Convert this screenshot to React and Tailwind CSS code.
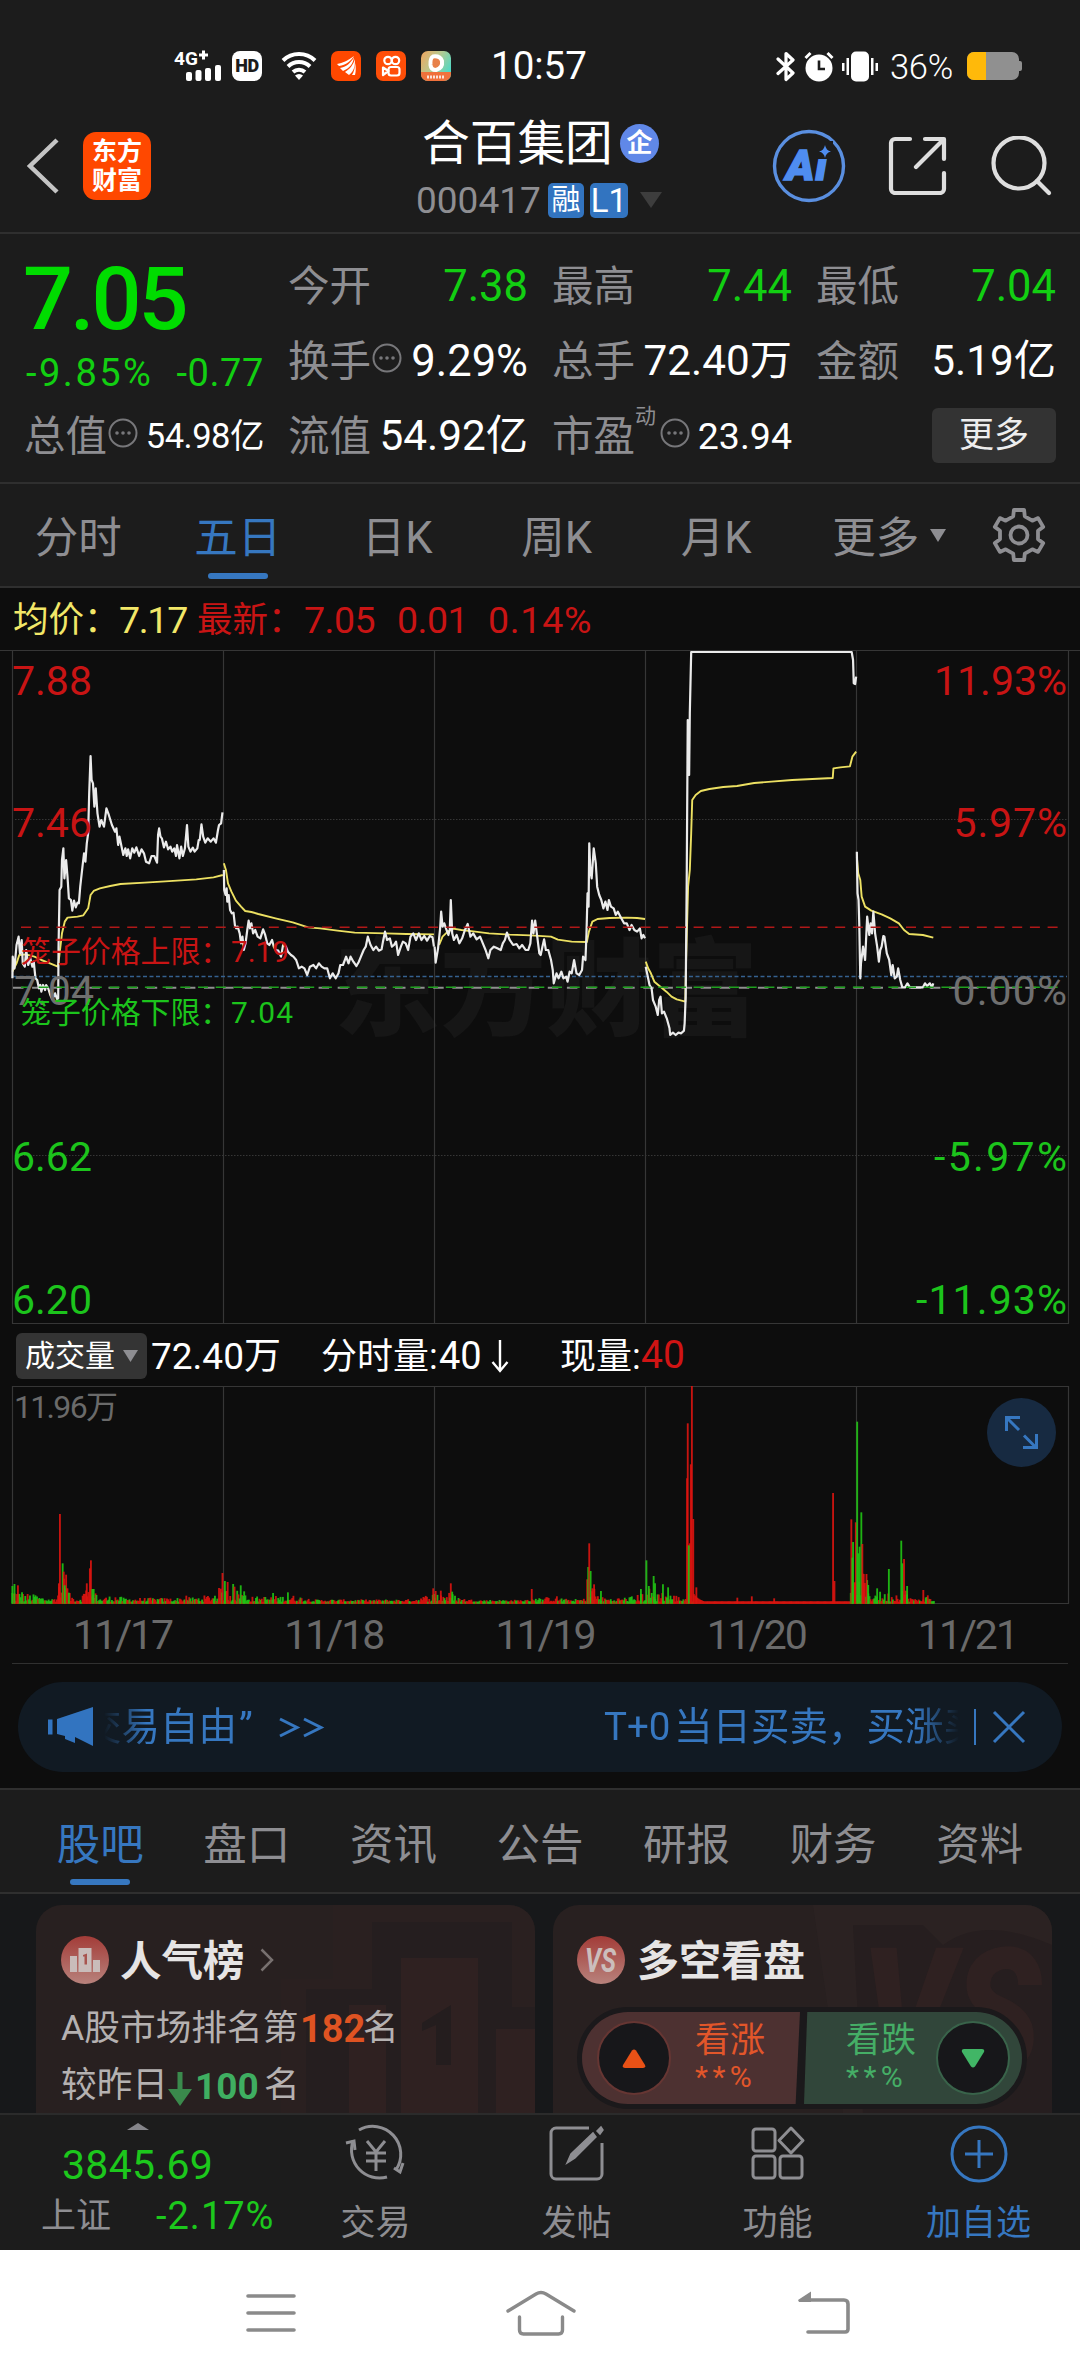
import React from "react";

const FONT = "font-[Roboto,'Noto_Sans_CJK_SC',sans-serif]";

/* ---------- status bar ---------- */

function StatusBar() {
  return (
    <div className="flex h-[106px] items-center pt-[26px] text-white">
      <svg className="ml-[173px] shrink-0 overflow-visible" width="50" height="34" viewBox="0 0 50 34">
        <text x="1" y="16" fontSize="19" fontWeight="700" fill="#fff" fontFamily="Roboto, sans-serif">4G</text>
        <path d="M26 6h9M30.5 1.500v9" stroke="#fff" strokeWidth="3" />
        <g fill="#fff">
          <rect x="13" y="23" width="6" height="9" rx="2" />
          <rect x="22.500" y="21" width="6" height="11" rx="2" />
          <rect x="32" y="19" width="6" height="13" rx="2" />
          <rect x="42" y="16" width="6" height="16" rx="2" />
        </g>
      </svg>
      <div className="ml-[9px] flex h-[30px] w-[30px] items-center justify-center rounded-[8px] bg-white text-[18px] font-black leading-none tracking-[-0.5px] text-[#1c1c1c]">HD</div>
      <svg className="ml-[19px]" width="36" height="29" viewBox="0 0 36 29" fill="none" stroke="#fff" strokeWidth="4">
        <path d="M2 8.500a23 23 0 0 1 32 0M7 14.500a16 16 0 0 1 22 0M12 20a9 9 0 0 1 12 0" />
        <path d="M18 28l-4-4.500a6 6 0 0 1 8 0z" fill="#fff" stroke="none" />
      </svg>
      <svg className="ml-[14px]" width="30" height="30" viewBox="0 0 30 30">
        <rect width="30" height="30" rx="7" fill="#ff4800" />
        <path d="M6 13C12 12 16 10 23 5c-3 5-8 9-15 10zM9 17c6-1 11-5 14-11-1 7-4 11-11 14zM14 21c5-3 8-7 10-13 0 8-1 12-6 16zM21 24c2-3 3-7 3-12 1 4 1 8 0 12z" fill="#fff" />
      </svg>
      <svg className="ml-[15px]" width="30" height="30" viewBox="0 0 30 30" fill="none" stroke="#fff" strokeWidth="2.200">
        <rect width="30" height="30" rx="7" fill="#ff4e08" stroke="none" />
        <circle cx="12" cy="9.500" r="3.700" />
        <circle cx="19.500" cy="9.500" r="3.700" />
        <rect x="12.500" y="16" width="11" height="8.500" rx="2.500" />
        <path d="M7 16.500l5.500 3.500-5.500 4z" strokeLinejoin="round" />
      </svg>
      <svg className="ml-[15px]" width="30" height="30" viewBox="0 0 30 30">
        <defs>
          <linearGradient id="app3" x1="0" y1="0" x2="1" y2="0.600">
            <stop offset="0" stopColor="#f2a45c" />
            <stop offset="0.500" stopColor="#b9c98f" />
            <stop offset="1" stopColor="#4fd8c4" />
          </linearGradient>
        </defs>
        <rect width="30" height="30" rx="7" fill="url(#app3)" />
        <path d="M0 21h30v2a7 7 0 0 1-7 7H7a7 7 0 0 1-7-7z" fill="#f0713c" />
        <path d="M12 5.500q7-1 9 4.500 1 7-6 9-5 0-5.500-5-.5-7 2.500-8.500z" fill="#e8804a" stroke="#fff" strokeWidth="4" />
        <path d="M13 8.500l6 3.500-6 3.500z" fill="#e8804a" />
        <path d="M6 26h18" stroke="#fff" strokeWidth="3" strokeDasharray="2 1" opacity="0.800" />
      </svg>
      <span className="ml-[40px] w-[100px] text-[38.500px] leading-none">10:57</span>
      <svg className="ml-[185px] shrink-0" width="20" height="31" viewBox="0 0 20 31" fill="none" stroke="#fff" strokeWidth="3.200" strokeLinejoin="round" strokeLinecap="round">
        <path d="M2 8l15 14-7 6.500V2.500L17 9 2 22.500" />
      </svg>
      <svg className="ml-[8px] shrink-0" width="30" height="31" viewBox="0 0 30 31">
        <circle cx="15" cy="17" r="13.500" fill="#fff" />
        <path d="M1.500 7l5-5M23.500 2l5 5" stroke="#fff" strokeWidth="3" />
        <path d="M15 9.500v8.500h6" stroke="#1c1c1c" strokeWidth="2.600" fill="none" />
      </svg>
      <svg className="ml-[8px] shrink-0" width="36" height="31" viewBox="0 0 36 31" fill="#fff">
        <rect x="9" y="0.500" width="18" height="30" rx="5" />
        <rect x="4.500" y="7" width="2.500" height="17" />
        <rect x="0" y="12" width="2.500" height="8" />
        <rect x="29" y="7" width="2.500" height="17" />
        <rect x="33.500" y="12" width="2.500" height="8" />
      </svg>
      <span className="ml-[12px] w-[65px] whitespace-nowrap pt-[2px] text-[34.500px] font-light leading-none tracking-[-0.300px]">36%</span>
      <svg className="ml-[12px] shrink-0" width="56" height="28" viewBox="0 0 56 28">
        <path d="M7 0h38a7 7 0 0 1 7 7v2h1a2 2 0 0 1 2 2v6a2 2 0 0 1-2 2h-1v2a7 7 0 0 1-7 7H7a7 7 0 0 1-7-7V7a7 7 0 0 1 7-7z" fill="#909090" />
        <path d="M7 0h12v28H7a7 7 0 0 1-7-7V7a7 7 0 0 1 7-7z" fill="#ffb90a" />
      </svg>
    </div>
  );
}

/* ---------- title bar ---------- */

function TitleBar() {
  return (
    <div className="flex h-[128px] border-b-2 border-[#2f2f2f]">
      <div className="flex w-[416px] items-start pt-[26px]">
        <svg className="ml-[26px] mt-[6px]" width="34" height="56" viewBox="0 0 34 56" fill="none" stroke="#c4c4c4" strokeWidth="4.500">
          <path d="M31 2L4 28l27 26" />
        </svg>
        <div className="ml-[23px] flex h-[68px] w-[68px] flex-col items-center justify-center gap-[3px] rounded-[13px] bg-[#ff4800] text-[25px] font-bold leading-[26px] text-white">
          <span>东方</span>
          <span>财富</span>
        </div>
      </div>
      <div className="w-[300px]">
        <div className="mt-[13px] flex h-[48px] items-center gap-[8px] pl-[6px]">
          <span className="w-[190px] whitespace-nowrap pt-[3px] text-[47.700px] leading-none text-white">合百集团</span>
          <span className="flex h-[39px] w-[39px] items-center justify-center rounded-full bg-[#6088e8] text-[26px] font-bold leading-none text-white">企</span>
        </div>
        <div className="mt-[14px] flex h-[38px] items-center">
          <span className="w-[132px] text-[37px] leading-none text-[#8e8e92]">000417</span>
          <span className="flex h-[35px] w-[36px] items-center justify-center rounded-[5px] bg-[#3274c0] text-[29px] leading-none text-white">融</span>
          <span className="ml-[6px] flex h-[35px] w-[38px] items-center justify-center rounded-[5px] bg-[#3274c0] text-[33px] leading-none text-white">L1</span>
          <svg className="ml-[12px]" width="22" height="16" viewBox="0 0 22 16">
            <path d="M0 0h22L11 16z" fill="#3d3d3d" />
          </svg>
        </div>
      </div>
      <div className="flex items-start pl-[56px] pt-[23px]">
        <svg width="74" height="74" viewBox="0 0 74 74">
          <circle cx="37" cy="37" r="34.500" fill="none" stroke="#5a8fe0" strokeWidth="3.400" />
          <text x="14" y="51" fontSize="43" fontWeight="900" fontStyle="italic" fontFamily="Roboto, sans-serif" fill="#4f8df0" stroke="#4f8df0" strokeWidth="1.500" textLength="41">Ai</text>
          <path d="M45 12h16v18H45z" fill="#1c1c1c" />
          <path d="M53 16q1 5.500 6 6.500q-5 1-6 6.500q-1-5.500-6-6.500q5-1 6-6.500z" fill="#4f8df0" />
        </svg>
        <svg className="ml-[42px] mt-[6px]" width="60" height="60" viewBox="0 0 60 60" fill="none" stroke="#dedede" strokeWidth="4.200" strokeLinecap="round" strokeLinejoin="round">
          <path d="M22 4H7a4 4 0 0 0-4 4v46a4 4 0 0 0 4 4h45a4 4 0 0 0 4-4V38M37 4h19v20M54 6L28 32" />
        </svg>
        <svg className="ml-[43px] mt-[7px]" width="62" height="62" viewBox="0 0 62 62" fill="none" stroke="#dedede" strokeWidth="4.200" strokeLinecap="round">
          <circle cx="28" cy="27" r="25.500" />
          <path d="M46 45l12 12" />
        </svg>
      </div>
    </div>
  );
}

/* ---------- quote panel ---------- */

function Dots() {
  return (
    <svg className="shrink-0" width="30" height="30" viewBox="0 0 30 30">
      <circle cx="15" cy="15" r="13.500" fill="none" stroke="#77777a" strokeWidth="2" />
      <g fill="#77777a">
        <circle cx="9" cy="15" r="1.800" />
        <circle cx="15" cy="15" r="1.800" />
        <circle cx="21" cy="15" r="1.800" />
      </g>
    </svg>
  );
}

function Cell({ label, value, green, dots, size, sup }) {
  return (
    <div className="flex h-[75px] items-center justify-between whitespace-nowrap">
      <div className="-ml-[2px] flex items-center">
        <span className="text-[41.5px] leading-none text-[#8e8e92]">{label}</span>
        {sup ? <span className="mb-[40px] w-[22px] text-[21px] leading-none text-[#8e8e92]">{sup}</span> : null}
        {dots ? <span className={sup ? "mb-[8px] ml-[3px]" : "mb-[8px] ml-[1px]"}><Dots /></span> : null}
      </div>
      <span className={(green ? "text-[#12cf12] " : "text-white ") + (size || "text-[42.300px]") + " leading-none"}>{value}</span>
    </div>
  );
}

function Quotes() {
  return (
    <div className="grid h-[250px] grid-cols-[238px_238px_238px_238px] gap-x-[26px] border-b-2 border-[#2f2f2f] pl-[26px] pt-[15px]">
      <div>
        <div className="-ml-[3px] flex h-[100px] items-center text-[88px] font-medium leading-none tracking-[-3px] text-[#00dc00]">7.05</div>
        <div className="flex h-[48px] items-center justify-between whitespace-nowrap text-[38px] leading-none text-[#12cf12]">
          <span className="tracking-[2.500px]">-9.85%</span>
          <span className="tracking-[0.600px]">-0.77</span>
        </div>
        <div className="h-[2px]" />
        <Cell label="总值" value="54.98亿" dots size="text-[34.500px] tracking-[-0.500px]" />
      </div>
      <div>
        <Cell label="今开" value="7.38" green size="text-[43.500px]" />
        <Cell label="换手" value="9.29%" dots size="text-[43.500px]" />
        <Cell label="流值" value="54.92亿" />
      </div>
      <div>
        <Cell label="最高" value="7.44" green size="text-[43.500px]" />
        <Cell label="总手" value="72.40万" />
        <Cell label="市盈" sup="动" value="23.94" dots size="text-[37.500px]" />
      </div>
      <div>
        <Cell label="最低" value="7.04" green size="text-[43.500px]" />
        <Cell label="金额" value="5.19亿" />
        <div className="flex h-[72px] items-center justify-end">
          <span className="flex h-[55px] w-[124px] items-center justify-center rounded-[6px] bg-[#333333] text-[35px] leading-none text-[#ededed]">更多</span>
        </div>
      </div>
    </div>
  );
}

/* ---------- period tabs ---------- */

function gearPath(cx, cy) {
  const teeth = 6;
  const pts = [];
  for (let i = 0; i < teeth; i++) {
    const a = (i * 2 * Math.PI) / teeth - Math.PI / 2;
    [[-0.3, 19.5], [-0.2, 25.5], [0.2, 25.5], [0.3, 19.5]].forEach(([d, r]) => {
      pts.push((cx + r * Math.cos(a + d)).toFixed(1) + "," + (cy + r * Math.sin(a + d)).toFixed(1));
    });
  }
  return "M" + pts.join("L") + "Z";
}

function PeriodTabs() {
  const tabs = ["分时", "五日", "日K", "周K", "月K", "更多"];
  return (
    <div className="flex h-[104px] items-center border-b-2 border-[#2f2f2f]">
      {tabs.map((t) => (
        <div key={t} className="relative flex h-full w-[159.500px] items-center justify-center pr-[3px] pt-[8px]">
          <span className={"text-[43.500px] leading-none " + (t === "五日" ? "text-[#3677c0]" : "text-[#8e8e92]")}>{t}</span>
          {t === "五日" ? <span className="absolute bottom-[7px] h-[6px] w-[60px] rounded-[3px] bg-[#3677c0]" /> : null}
          {t === "更多" ? (
            <svg className="absolute left-[132px] top-[45px]" width="16" height="13" viewBox="0 0 16 13">
              <path d="M0 0h16L8 13z" fill="#8e8e92" />
            </svg>
          ) : null}
        </div>
      ))}
      <svg className="ml-[33px]" width="58" height="58" viewBox="0 0 58 58" fill="none" stroke="#8e8e92" strokeWidth="3.800" strokeLinejoin="round">
        <path d={gearPath(29, 29)} />
        <circle cx="29" cy="29" r="8.500" />
      </svg>
    </div>
  );
}

/* ---------- charts ---------- */

const PRICE = [
  "36,1195 37,1130 42,1165 48,1095 54,1070 58,1120 63,1080 66,1150 72,1160 76,1110 82,1155 88,1135 94,1160 98,1145 103,1195 108,1200 113,1225 117,1215 120,1235 125,1215 131,1230 134,1215 140,1225 146,1245 152,1258 160,1240 166,1258 169,1255 170,1100 173,930 178,920 180,840 184,805 187,895 192,840 196,890 200,955 206,960 210,992 215,962 220,982 225,968 229,970 233,920 240,855 244,820 248,845 252,790 256,760 259,640 263,528 266,600 270,610 274,680 278,625 283,700 289,740 294,720 302,740 309,685 316,705 325,735 334,755 338,745 343,795 347,770 353,800 358,825 364,805 368,828 372,808 378,835 384,805 390,818 396,802 404,828 411,808 418,820 424,845 433,850 440,828 448,828 456,848 459,765 462,745 466,770 470,775 476,802 482,785 488,808 495,800 500,815 506,805 511,828 514,795 521,835 526,800 531,828 537,805 543,735 547,800 553,815 560,803 565,815 573,805 577,780 580,780 585,733 590,770 596,788 603,775 612,785 620,775 627,788 633,750 636,735 642,730 646,697",
  "650,870 651,930 655,945 658,925 660,965 664,945 668,990 673,1000 678,998 682,1035 686,1045 690,1040 696,1060 700,1090 704,1070 708,1110 713,1090 718,1050 722,1022 726,1045 730,1030 735,1060 741,1050 748,1070 756,1075 764,1048 770,1065 776,1090 782,1095 790,1080 795,1100 800,1110 808,1112 816,1130 822,1095 830,1100 836,1115 845,1125 852,1130 860,1140 868,1165 876,1160 884,1165 892,1185 900,1160 910,1155 918,1165 926,1150 934,1160 942,1165 950,1165 958,1195 966,1180 975,1195 983,1180 988,1155 996,1155 1005,1130 1012,1150 1018,1130 1026,1145 1035,1158 1042,1145 1048,1130 1056,1110 1062,1100 1068,1070 1076,1095 1084,1110 1092,1100 1100,1112 1108,1108 1112,1085 1118,1055 1124,1080 1132,1075 1138,1100 1144,1095 1150,1085 1156,1125 1164,1100 1170,1085 1178,1090 1185,1110 1192,1070 1200,1060 1208,1080 1216,1060 1224,1080 1232,1068 1240,1082 1248,1068 1256,1072 1260,1100",
  "1262,1100 1265,1148 1272,1105 1278,1045 1281,995 1285,1040 1290,1030 1296,1048 1302,1065 1306,1050 1309,960 1313,1060 1318,1080 1326,1065 1334,1090 1342,1075 1350,1050 1358,1032 1366,1070 1374,1060 1384,1078 1394,1070 1402,1090 1410,1110 1418,1135 1424,1110 1434,1100 1444,1105 1454,1110 1460,1090 1466,1080 1472,1058 1480,1080 1490,1095 1500,1092 1508,1105 1516,1095 1526,1110 1534,1110 1540,1090 1545,1022 1549,1060 1554,1022 1560,1070 1566,1120 1570,1125 1575,1100 1580,1078 1585,1110 1592,1110 1600,1140 1605,1170 1608,1210 1616,1180 1622,1195 1630,1175 1636,1195 1644,1190 1648,1205 1654,1175 1660,1180 1667,1140 1674,1180 1682,1185 1690,1170 1693,1130 1700,1140 1703,1060 1706,940 1709,980 1711,790 1714,870 1718,895 1724,805 1730,850 1734,920 1740,945 1746,960 1752,985 1758,965 1764,990 1768,960 1774,980 1782,985 1788,1005 1794,995 1804,1015 1812,1030 1820,1030 1828,1050 1834,1035 1842,1050 1850,1055 1858,1045 1863,1075 1868,1065 1873,1075",
  "1875,1160 1880,1185 1886,1215 1892,1225 1896,1260 1904,1280 1910,1305 1914,1260 1918,1250 1922,1300 1928,1295 1936,1315 1944,1345 1946,1365 1954,1358 1962,1365 1970,1358 1978,1360 1986,1352 1988,1330 1991,1250 1994,900 1997,420 2001,585 2003,400 2007,216 2473,216 2477,240 2479,310 2483,312 2486,290",
  "2488,815 2490,940 2493,960 2495,1030 2498,1195 2500,1150 2506,1100 2512,1140 2518,1010 2524,1065 2528,1030 2532,1060 2536,995 2541,1060 2547,1100 2552,1145 2556,1110 2560,1100 2565,1068 2568,1070 2575,1120 2582,1140 2588,1185 2592,1155 2598,1195 2604,1190 2608,1165 2614,1200 2620,1222 2628,1222 2635,1210 2642,1222 2680,1222 2686,1210 2692,1218 2700,1210 2706,1222 2710,1210",
];

const AVERAGE = [
  "36,1175 48,1150 56,1125 75,1123 100,1130 120,1140 140,1148 168,1160 172,1130 180,1060 188,1025 196,1013 225,1010 242,1006 256,985 263,945 272,933 290,925 320,918 350,912 420,908 480,904 570,898 620,892 647,885",
  "650,850 656,870 662,910 672,935 685,962 700,980 712,993 730,996 750,1002 800,1015 850,1027 895,1042 930,1045 980,1052 1030,1058 1120,1060 1180,1062 1260,1063",
  "1275,1095 1285,1070 1300,1055 1316,1046 1340,1050 1380,1055 1420,1060 1480,1064 1540,1066 1600,1070 1620,1079 1660,1085 1704,1086 1710,1055 1720,1025 1735,1017 1770,1014 1820,1013 1850,1014 1873,1017",
  "1875,1145 1882,1165 1890,1180 1900,1205 1915,1218 1935,1235 1950,1250 1965,1258 1990,1265 1992,1150 1998,920 2003,870 2007,760 2010,660 2020,645 2035,633 2060,627 2100,621 2140,618 2190,609 2240,605 2300,600 2418,594 2420,565 2440,562 2468,559 2475,530 2486,515",
  "2488,830 2492,880 2498,900 2502,950 2512,980 2530,992 2560,1003 2585,1015 2610,1030 2625,1050 2640,1062 2680,1065 2710,1073",
];

const DAY_LINES = [223.5, 434.5, 645.5, 856.5];

function PriceChart() {
  const big = { fontSize: 41, fontFamily: "Roboto, sans-serif" };
  const cage = { fontSize: 29.9, fontFamily: "Roboto, 'Noto Sans CJK SC', sans-serif" };
  return (
    <svg className="block" width="1080" height="675" viewBox="0 650 1080 675">
      <g fill="#161616" fontSize="106" fontWeight="900" fontFamily="'Noto Sans CJK SC', sans-serif">
        <text x="334" y="1027">东方财富</text>
      </g>
      <g stroke="#363636" strokeWidth="1.200" fill="none">
        <path d="M0 650.500H1080" />
        <path d="M12.500 650V1323.500H1068.500V650" />
        {DAY_LINES.map((x) => <path key={x} d={"M" + x + " 651V1323"} />)}
        <path d="M15 819.500H1068M15 1155.500H1068" strokeDasharray="1.500 1.500" />
      </g>
      <path d="M13 976.500H1067" stroke="#35618f" strokeWidth="1.300" strokeDasharray="4 2.500" />
      <path d="M13 987.700H1062" stroke="#8f8f8f" strokeWidth="2" strokeDasharray="10.500 8.600" />
      <g transform="translate(0 580) scale(0.34439 0.33333)" fill="none" strokeLinejoin="round">
        {AVERAGE.map((p, i) => <polyline key={i} points={p} stroke="#ece062" strokeWidth="1.900" vectorEffect="non-scaling-stroke" />)}
        {PRICE.map((p, i) => <polyline key={i} points={p} stroke="#ebebeb" strokeWidth="2.200" vectorEffect="non-scaling-stroke" />)}
      </g>
      <path d="M21 927.300H1058" stroke="#b01818" strokeWidth="1.600" strokeDasharray="10 7.700" />
      <path d="M21 987.300H1058" stroke="#1fa01f" strokeWidth="1.600" strokeDasharray="10 7.700" />
      <g {...big}>
        <g fill="#c81414">
          <text x="12" y="695">7.88</text>
          <text x="12" y="837">7.46</text>
          <text x="1067" y="695" textAnchor="end">11.93%</text>
          <text x="1067" y="837" textAnchor="end" textLength="113.500">5.97%</text>
        </g>
        <g fill="#6f6f6f">
          <text x="14" y="1005">7.04</text>
          <text x="1067" y="1005" textAnchor="end" textLength="114.500">0.00%</text>
        </g>
        <g fill="#1cc41c">
          <text x="12" y="1171">6.62</text>
          <text x="12" y="1314">6.20</text>
          <text x="1067" y="1171" textAnchor="end" textLength="133">-5.97%</text>
          <text x="1067" y="1314" textAnchor="end" textLength="151">-11.93%</text>
        </g>
      </g>
      <g {...cage}>
        <text x="21" y="962" fill="#c81414">笼子价格上限：</text>
        <text x="231" y="962" fill="#c81414" textLength="58">7.19</text>
        <text x="21" y="1023" fill="#1cc41c">笼子价格下限：</text>
        <text x="231" y="1023" fill="#1cc41c" textLength="62">7.04</text>
      </g>
    </svg>
  );
}

/* typical bar height at [position, height]; peaks are listed in SPIKES */
const ENVELOPE = [[35, 50], [60, 30], [110, 20], [150, 9], [165, 20], [172, 80], [192, 80], [200, 28], [225, 9], [240, 30], [268, 40], [290, 12], [335, 22], [360, 12], [500, 12], [560, 14], [600, 20], [640, 40], [665, 40], [700, 36], [730, 16], [800, 18], [850, 20], [890, 14], [910, 7], [1100, 7], [1200, 8], [1240, 22], [1270, 34], [1310, 28], [1340, 11], [1380, 6], [1535, 6], [1550, 22], [1570, 10], [1610, 20], [1650, 7], [1700, 10], [1725, 50], [1740, 16], [1780, 10], [1850, 20], [1880, 44], [1930, 30], [1980, 16], [2025, 36], [2035, 14], [2060, 7], [2420, 5], [2465, 6], [2475, 60], [2510, 90], [2530, 40], [2560, 30], [2600, 28], [2620, 60], [2640, 20], [2660, 7], [2690, 18], [2712, 6]];

const SPIKES = [[36, 648, 1], [42, 642, 1], [52, 646, 0], [64, 667, 1], [103, 676, 1], [171, 640, 0], [174, 432, 0], [182, 580, 1], [185, 605, 0], [192, 614, 0], [188, 646, 1], [200, 668, 1], [252, 640, 0], [261, 595, 0], [264, 571, 0], [268, 657, 1], [272, 657, 1], [280, 675, 1], [541, 677, 0], [636, 654, 0], [646, 609, 0], [653, 633, 1], [661, 636, 0], [677, 642, 1], [681, 650, 0], [699, 646, 1], [709, 664, 1], [793, 669, 1], [836, 667, 1], [1258, 655, 0], [1265, 663, 0], [1280, 662, 0], [1309, 640, 0], [1313, 665, 1], [1544, 657, 0], [1705, 628, 0], [1708, 591, 1], [1711, 520, 0], [1715, 603, 1], [1720, 655, 0], [1725, 643, 0], [1745, 663, 1], [1861, 657, 1], [1877, 571, 1], [1884, 648, 1], [1898, 618, 1], [1902, 640, 1], [1925, 643, 1], [1940, 652, 1], [1995, 325, 0], [1997, 160, 0], [2003, 520, 0], [2006, 283, 0], [2009, 48, 0], [2000, 526, 1], [2013, 447, 0], [2022, 652, 0], [2141, 683, 0], [2183, 679, 0], [2248, 685, 0], [2419, 369, 0], [2423, 633, 0], [2472, 448, 0], [2475, 563, 1], [2477, 516, 1], [2485, 457, 0], [2492, 550, 1], [2489, 155, 1], [2496, 530, 1], [2501, 427, 1], [2504, 522, 0], [2508, 612, 0], [2516, 612, 0], [2521, 645, 1], [2547, 655, 1], [2581, 597, 1], [2617, 512, 1], [2621, 580, 1], [2625, 567, 0], [2634, 648, 1], [2681, 660, 0], [2694, 676, 0]];

function envelopeAt(x) {
  for (let i = 1; i < ENVELOPE.length; i++) {
    if (x <= ENVELOPE[i][0]) {
      const [x0, h0] = ENVELOPE[i - 1];
      const [x1, h1] = ENVELOPE[i];
      return h0 + ((h1 - h0) * (x - x0)) / (x1 - x0);
    }
  }
  return 4;
}

function volumeBars() {
  const bars = [];
  let seed = 12345;
  const rand = () => {
    seed = (seed * 1103515245 + 12345) % 2147483648;
    return seed / 2147483648;
  };
  for (let x = 36; x < 2712; x += 3.4) {
    const rally = (x > 2012 && x < 2470) || (x > 165 && x < 178) || (x > 240 && x < 262);
    const r = rand();
    const h = rally && x > 2012 ? Math.max(6, 32 * Math.exp(-(x - 2012) / 20)) : 5 + envelopeAt(x) * Math.pow(r, 1.5);
    const up = rally ? true : rand() > 0.48;
    bars.push([x, 700 - h, up ? 0 : 1]);
  }
  return bars;
}

function VolumeChart() {
  return (
    <svg className="block" width="1080" height="219" viewBox="0 1386 1080 219">
      <g stroke="#363636" strokeWidth="1.200" fill="none">
        <path d="M12.500 1386.500H1068.500V1603.500H12.500Z" />
        {DAY_LINES.map((x) => <path key={x} d={"M" + x + " 1387V1603"} />)}
      </g>
      <path d="M12.500 1603.300H934" stroke="#8a2410" strokeWidth="1.600" />
      <g transform="translate(0 1370) scale(0.34439 0.33333)" strokeWidth="5.400">
        {volumeBars().concat(SPIKES).map(([x, y, c], i) => (
          <path key={i} d={"M" + x.toFixed(1) + " 701V" + y.toFixed(1)} stroke={c ? "#20c414" : "#dc1410"} strokeOpacity="0.900" />
        ))}
      </g>
      <text x="14" y="1418" fontSize="32" fill="#6a6a6a" fontFamily="Roboto, 'Noto Sans CJK SC', sans-serif" textLength="104">11.96万</text>
      <circle cx="1021.500" cy="1432.500" r="34.500" fill="#172a41" />
      <path d="M1019 1430l-12-12M1006.500 1431v-13.500h13.500M1024 1435.500l12 12M1036.500 1434v13.500h-13.500" stroke="#3677c0" strokeWidth="3" fill="none" />
    </svg>
  );
}

function Charts() {
  const dates = ["11/17", "11/18", "11/19", "11/20", "11/21"];
  return (
    <div className="h-[1200px] bg-[#0d0d0d]">
      <div className="flex h-[62px] items-center whitespace-nowrap pl-[13px] pt-[3px] text-[35.500px] leading-none">
        <span className="w-[106px] text-[#f2e768]">均价：</span>
        <span className="w-[78px] text-[37.500px] tracking-[-1.300px] text-[#f2e768]">7.17</span>
        <span className="w-[107px] text-[#c81414]">最新：</span>
        <span className="w-[93px] text-[37.500px] tracking-[-0.500px] text-[#c81414]">7.05</span>
        <span className="w-[91px] text-[37.500px] tracking-[-0.500px] text-[#c81414]">0.01</span>
        <span className="text-[37.500px] tracking-[0.700px] text-[#c81414]">0.14%</span>
      </div>
      <PriceChart />
      <div className="flex h-[61px] items-center whitespace-nowrap pl-[16px] text-[36px] leading-none text-white">
        <div className="flex h-[46px] w-[131px] items-center rounded-[6px] bg-[#343434] pl-[9px]">
          <span className="w-[98px] text-[30px] leading-none">成交量</span>
          <svg width="15" height="12" viewBox="0 0 15 12">
            <path d="M0 0h15L7.500 12z" fill="#8e8e92" />
          </svg>
        </div>
        <span className="ml-[4px] w-[170px] pt-[2px] text-[37px]">72.40万</span>
        <span className="w-[118px] pt-[2px]">分时量:</span>
        <span className="w-[52px] text-[38px]">40</span>
        <svg className="mr-[51px]" width="18" height="34" viewBox="0 0 18 34" fill="none" stroke="#fff" strokeWidth="2.400">
          <path d="M9 1v31M1.500 23L9 32l7.500-9" />
        </svg>
        <span className="w-[81px] pt-[2px]">现量:</span>
        <span className="text-[39px] text-[#d01414]">40</span>
      </div>
      <VolumeChart />
      <div className="mx-[12px] grid h-[59px] grid-cols-5 items-center border-b border-[#303030] pt-[3px] text-center text-[41px] leading-none tracking-[-2px] text-[#6a6a6a]">
        {dates.map((d) => <span key={d} className="pl-[10px]">{d}</span>)}
      </div>
      <Banner />
    </div>
  );
}

function Banner() {
  return (
    <div className="mx-[18px] mt-[18px] flex h-[90px] items-center rounded-[45px] bg-[#111a23] text-[38.500px] leading-none text-[#3677c0]">
      <svg className="ml-[30px] shrink-0" width="46" height="40" viewBox="0 0 46 40" fill="#3274c0">
        <path d="M45 0v39L27 30v6l-10-4v-3l-8-2V12z" />
        <rect x="0" y="12.500" width="4.500" height="15" />
      </svg>
      <div className="ml-[10px] flex w-[855px] overflow-hidden whitespace-nowrap py-2 [mask-image:linear-gradient(to_right,transparent,black_5%,black_95%,transparent)]">
        <span className="ml-[-21px] w-[156px] shrink-0">交易自由</span>
        <span className="w-[38px] shrink-0">”</span>
        <svg className="mt-[5px] w-[327px] shrink-0" width="327" height="28" viewBox="0 0 327 28" fill="none" stroke="#3677c0" strokeWidth="3">
          <path d="M3 6l17 8.500L3 23M27 6l17 8.500L27 23" />
        </svg>
        <span className="w-[70px] shrink-0">T+0</span>
        <span className="shrink-0">当日买卖，买涨买跌</span>
      </div>
      <span className="ml-[15px] h-[36px] w-[1.500px] bg-[#3677c0]" />
      <svg className="ml-[16px]" width="34" height="34" viewBox="0 0 34 34" stroke="#3677c0" strokeWidth="3">
        <path d="M2 2l30 30M32 2L2 32" />
      </svg>
    </div>
  );
}

/* ---------- info section ---------- */

function InfoTabs() {
  const tabs = ["股吧", "盘口", "资讯", "公告", "研报", "财务", "资料"];
  return (
    <div className="grid h-[106px] grid-cols-7 border-y-2 border-[#2f2f2f] bg-[#1c1c1c] px-[27px]">
      {tabs.map((t) => (
        <div key={t} className="relative flex items-center justify-center pt-[9px]">
          <span className={"text-[43.500px] leading-none " + (t === "股吧" ? "text-[#3677c0]" : "text-[#8e8e92]")}>{t}</span>
          {t === "股吧" ? <span className="absolute bottom-[7px] h-[6px] w-[60px] rounded-[3px] bg-[#3677c0]" /> : null}
        </div>
      ))}
    </div>
  );
}

function RankCard() {
  return (
    <div className="relative h-[260px] overflow-hidden rounded-[26px] bg-[#282020]">
      <svg className="absolute left-0 top-0" width="499" height="208" viewBox="0 0 499 208">
        <path d="M245 208V74h52V40h0V0h202v208z" fill="#2b2222" opacity="0.600" />
        <path d="M270 208V84h66V17h140v85h23v106z" fill="#251e1f" />
        <path d="M365 208V53h77v155zM313 208V100h37v108zM460 208v-84h39v84z" fill="#2f2121" />
        <path d="M386 118l29-18v60h-15v-40l-14 6z" fill="#241d1e" />
      </svg>
      <div className="relative pl-[25px] pt-[31px]">
        <div className="flex h-[48px] items-center">
          <svg width="48" height="48" viewBox="0 0 48 48">
            <defs>
              <linearGradient id="badge" x1="0" y1="0" x2="0" y2="1">
                <stop offset="0" stopColor="#a33c38" />
                <stop offset="1" stopColor="#b8827c" />
              </linearGradient>
            </defs>
            <circle cx="24" cy="24" r="24" fill="url(#badge)" />
            <g fill="#c9bcba">
              <rect x="9" y="20" width="7" height="16" />
              <rect x="17.500" y="12" width="13" height="24" />
              <rect x="32" y="24" width="7" height="12" />
            </g>
            <path d="M22 19l4-1.500v11h-2.500v-8H22z" fill="#a8544f" />
          </svg>
          <span className="ml-[11px] w-[140px] whitespace-nowrap pt-[3px] text-[41.500px] font-bold leading-none text-[#e6e4e4]">人气榜</span>
          <svg width="14" height="24" viewBox="0 0 14 24" fill="none" stroke="#77706f" strokeWidth="2.500">
            <path d="M1.500 1.500L12 12 1.500 22.500" />
          </svg>
        </div>
        <div className="mt-[21px] flex h-[48px] items-center whitespace-nowrap text-[35.700px] leading-none text-[#b5b1b1]">
          <span className="w-[239px]">A股市场排名第</span>
          <span className="w-[63px] text-[38px] font-bold text-[#df5322]">182</span>
          <span>名</span>
        </div>
        <div className="mt-[9px] flex h-[48px] items-center whitespace-nowrap text-[35.700px] leading-none text-[#b5b1b1]">
          <span className="w-[107px]">较昨日</span>
          <svg className="mt-[6px]" width="24" height="34" viewBox="0 0 24 34">
            <path d="M9.500 0h5v17H24L12 34 0 17h9.500z" fill="#3a8a4c" />
          </svg>
          <span className="ml-[3px] w-[69px] text-[37px] font-bold text-[#3fae61]">100</span>
          <span>名</span>
        </div>
      </div>
    </div>
  );
}

function VersusCard() {
  return (
    <div className="relative h-[260px] overflow-hidden rounded-[26px] bg-[#282020]">
      <svg className="absolute left-0 top-0" width="499" height="208" viewBox="0 0 499 208">
        <path d="M260 0h239v208H290z" fill="#2c2423" opacity="0.700" />
        <path d="M300 20h70l20 20q40-30 109 0v168H310z" fill="#261e1f" />
        <text x="308" y="168" fontSize="175" fontWeight="900" fontStyle="italic" fontFamily="Roboto, sans-serif" fill="#2f2121" textLength="180" lengthAdjust="spacingAndGlyphs">VS</text>
      </svg>
      <div className="relative pl-[24px] pt-[31px]">
        <div className="flex h-[48px] items-center">
          <svg width="48" height="48" viewBox="0 0 48 48">
            <circle cx="24" cy="24" r="24" fill="url(#badge)" />
            <text x="8" y="36" fontSize="33" fontWeight="700" fontStyle="italic" fontFamily="Roboto, sans-serif" fill="#cbbebc" textLength="31" lengthAdjust="spacingAndGlyphs">VS</text>
          </svg>
          <span className="ml-[12px] whitespace-nowrap pt-[3px] text-[42px] font-bold leading-none text-[#e6e4e4]">多空看盘</span>
        </div>
        <div className="mt-[23px] flex h-[102px] w-[450px] rounded-[51px] border-[5px] border-[#1b191b] bg-[#1b191b]">
          <div className="flex h-[92px] w-[218px] items-center rounded-l-[46px] bg-[#4d3131] [clip-path:polygon(0_0,100%_0,98%_100%,0_100%)]">
            <div className="ml-[15px] flex h-[74px] w-[74px] items-center justify-center rounded-full border-[2px] border-[#663633] bg-[#17171a]">
              <svg width="24" height="19" viewBox="0 0 24 19"><path d="M10 1.500q2-2 4 0L23 16q1 3-2 3H3q-3 0-2-3z" fill="#e85116" /></svg>
            </div>
            <div className="ml-[24px] text-[35px] leading-none text-[#e2562a]">
              <div className="h-[36px]">看涨</div>
              <div className="mt-[1px] text-[30px] leading-[34px]"><span className="tracking-[4.500px]">**</span>%</div>
            </div>
          </div>
          <div className="ml-[4px] flex h-[92px] w-[218px] items-center rounded-r-[46px] bg-[#31463a] [clip-path:polygon(1.500%_0,100%_0,100%_100%,0_100%)]">
            <div className="ml-[42px] w-[90px] text-[35px] leading-none text-[#45ae66]">
              <div className="h-[36px]">看跌</div>
              <div className="mt-[1px] text-[30px] leading-[34px]"><span className="tracking-[4.500px]">**</span>%</div>
            </div>
            <div className="flex h-[74px] w-[74px] items-center justify-center rounded-full border-[2px] border-[#39634a] bg-[#17171a]">
              <svg width="24" height="19" viewBox="0 0 24 19"><path d="M10 17.500q2 2 4 0L23 3q1-3-2-3H3Q0 0 1 3z" fill="#41b666" /></svg>
            </div>
          </div>
        </div>
      </div>
    </div>
  );
}

/* ---------- bottom bars ---------- */

const ACTIONS = [
  {
    label: "交易",
    icon: (
      <g>
        <path d="M16 9a28 28 0 0 1 37 40M44 56A28 28 0 0 1 10 20" />
        <path d="M3 22l8-2 1 9M60 42l-3 9-6-4" />
        <path d="M24 20l9 11 9-11M33 31v19M23 32h20M23 40h20" />
      </g>
    ),
  },
  {
    label: "发帖",
    icon: (
      <g>
        <path d="M45 7H12a5 5 0 0 0-5 5v41a5 5 0 0 0 5 5h41a5 5 0 0 0 5-5V22" />
        <path d="M23 42l4-9 22-21 3 4-21 21z" fill="#8e8e92" strokeWidth="1.500" />
        <path d="M53 10l4-4 2 3-3 4z" fill="#8e8e92" strokeWidth="1.500" />
      </g>
    ),
  },
  {
    label: "功能",
    icon: (
      <g>
        <rect x="8" y="8" width="22" height="22" rx="3" />
        <rect x="8" y="35" width="22" height="22" rx="3" />
        <rect x="35" y="35" width="22" height="22" rx="3" />
        <path d="M46 7l12 12.500L46 32 34 19.500z" strokeLinejoin="round" />
      </g>
    ),
  },
  {
    label: "加自选",
    active: true,
    icon: (
      <g>
        <circle cx="33" cy="33" r="27" />
        <path d="M33 19v28M19 33h28" />
      </g>
    ),
  },
];

function ActionBar() {
  return (
    <div className="flex h-[137px] border-t-2 border-[#2b2b2b] bg-[#1c1c1c]">
      <div className="w-[275px]">
        <svg className="ml-[127px] mt-[8px]" width="22" height="7" viewBox="0 0 22 7">
          <path d="M0 7L11 0l11 7z" fill="#85858a" />
        </svg>
        <div className="mt-[14px] pl-[62px] text-[41px] leading-[42px] tracking-[0.300px] text-[#1cc81c]">3845.69</div>
        <div className="mt-[9px] flex h-[42px] items-center pl-[41px] leading-none">
          <span className="w-[115px] text-[35px] text-[#8e8e92]">上证</span>
          <span className="whitespace-nowrap text-[38px] tracking-[1px] text-[#1cc81c]">-2.17%</span>
        </div>
      </div>
      {ACTIONS.map((a) => (
        <div key={a.label} className="flex w-[201px] flex-col items-center pt-[6px]">
          <svg width="66" height="66" viewBox="0 0 66 66" fill="none" stroke={a.active ? "#3677c0" : "#8e8e92"} strokeWidth="3">
            {a.icon}
          </svg>
          <span className={"mt-[19px] text-[35px] leading-none " + (a.active ? "text-[#3677c0]" : "text-[#8e8e92]")}>{a.label}</span>
        </div>
      ))}
    </div>
  );
}

function SystemNav() {
  return (
    <div className="flex h-[126px] items-center bg-white">
      <svg className="ml-[245px]" width="52" height="44" viewBox="0 0 52 44" stroke="#8a8a8a" strokeWidth="3.600" strokeLinecap="round">
        <path d="M3 5h46M3 22h46M3 39h46" />
      </svg>
      <svg className="ml-[208px]" width="72" height="48" viewBox="0 0 72 48" fill="none" stroke="#8a8a8a" strokeWidth="3.400" strokeLinecap="round" strokeLinejoin="round">
        <path d="M3 22L31 5q5-3 10 0l28 17" />
        <path d="M14.500 28v13q0 4 4 4h35q4 0 4-4V28" />
      </svg>
      <svg className="ml-[220px]" width="54" height="46" viewBox="0 0 54 46" fill="none" stroke="#8a8a8a" strokeWidth="3.600" strokeLinecap="round">
        <path d="M11 42h37q3 0 3-3V14q0-4-4-4H6" />
        <path d="M1 10L14 1.500V12H2z" fill="#8a8a8a" stroke="none" />
      </svg>
    </div>
  );
}

export default function App() {
  return (
    <div className={"h-[2376px] w-[1080px] overflow-hidden bg-[#1c1c1c] " + FONT}>
      <StatusBar />
      <TitleBar />
      <Quotes />
      <PeriodTabs />
      <Charts />
      <InfoTabs />
      <div className="grid h-[219px] grid-cols-[499px_499px] gap-x-[18px] overflow-hidden bg-[#17181a] pl-[36px] pt-[11px]">
        <RankCard />
        <VersusCard />
      </div>
      <ActionBar />
      <SystemNav />
    </div>
  );
}
